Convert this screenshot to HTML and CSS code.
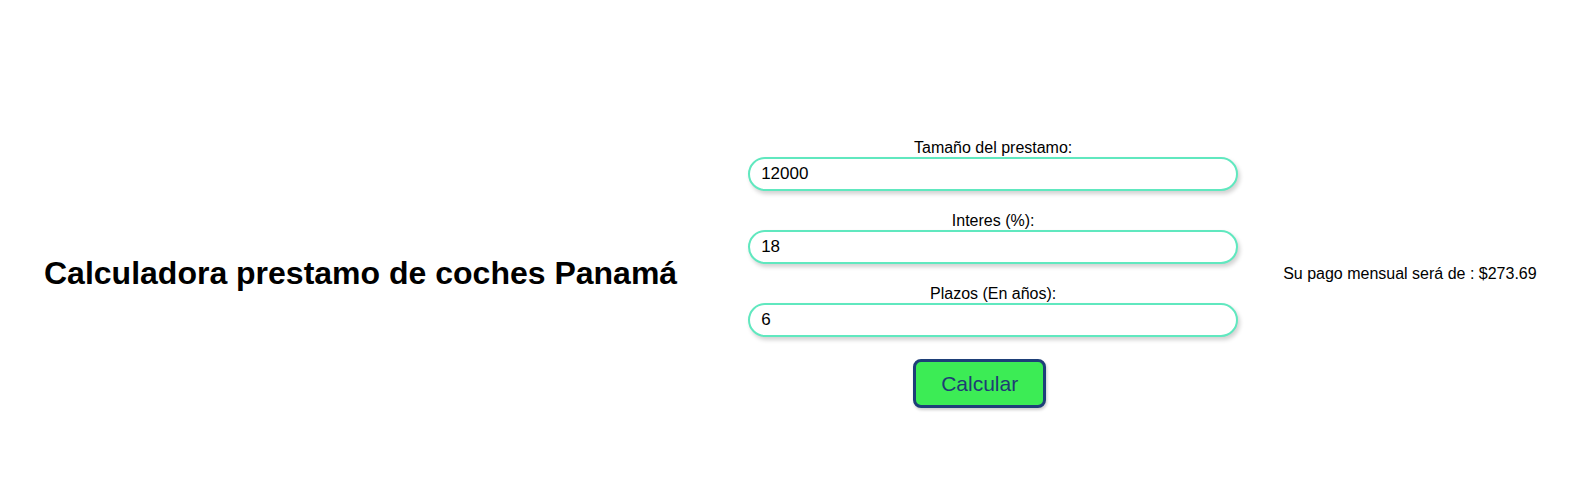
FILE: index.html
```html
<!DOCTYPE html>
<html lang="es">
<head>
<meta charset="utf-8">
<title>Calculadora prestamo de coches Panamá</title>
<link rel="stylesheet" href="styles.css">
</head>
<body>
<main class="page">
  <h1 class="title">Calculadora prestamo de coches Panamá</h1>
  <form class="form">
    <label class="label" for="monto">Tamaño del prestamo:</label>
    <input class="field" id="monto" type="text" value="12000">
    <label class="label" for="interes">Interes (%):</label>
    <input class="field" id="interes" type="text" value="18">
    <label class="label" for="plazo">Plazos (En años):</label>
    <input class="field field-last" id="plazo" type="text" value="6">
    <div class="actions"><button class="btn" type="button">Calcular</button></div>
  </form>
  <p class="result">Su pago mensual será de : $273.69</p>
</main>
</body>
</html>
```
FILE: styles.css
```css
* { box-sizing: border-box; }
html, body { margin: 0; padding: 0; background: #fff; }
body { font-family: "Liberation Sans", Arial, sans-serif; color: #000; }
.page {
  display: flex;
  align-items: center;
  height: 499px;
  padding-left: 44px;
  padding-top: 48px;
}
.page > * { flex-shrink: 0; }
.title {
  margin: 0 71px 0 0;
  font-size: 32px;
  font-weight: bold;
  white-space: nowrap;
}
.form {
  width: 490px;
  display: flex;
  flex-direction: column;
  margin-right: 45px;
}
.label {
  display: block;
  text-align: center;
  font-size: 16px;
  line-height: 18px;
}
.field {
  display: block;
  width: 100%;
  height: 34px;
  border: 2px solid #60e8bf;
  border-radius: 17px;
  padding: 0 11px;
  font-family: "Liberation Sans", Arial, sans-serif;
  font-size: 17px;
  color: #000;
  margin: 0 0 21px 0;
  box-shadow: 2px 3px 4px rgba(0,0,0,0.18);
  outline: none;
}
.field-last { margin-bottom: 22px; }
.actions { display: flex; justify-content: center; padding-right: 27px; }
.btn {
  width: 133px;
  height: 49px;
  background: #3cec55;
  border: 3px solid #1e3f78;
  border-radius: 8px;
  color: #1e3c74;
  font-family: "Liberation Sans", Arial, sans-serif;
  font-size: 21px;
  box-shadow: 1px 2px 3px rgba(0,0,0,0.2);
  padding: 0;
}
.result {
  margin: 0;
  font-size: 16px;
  white-space: nowrap;
}
```
